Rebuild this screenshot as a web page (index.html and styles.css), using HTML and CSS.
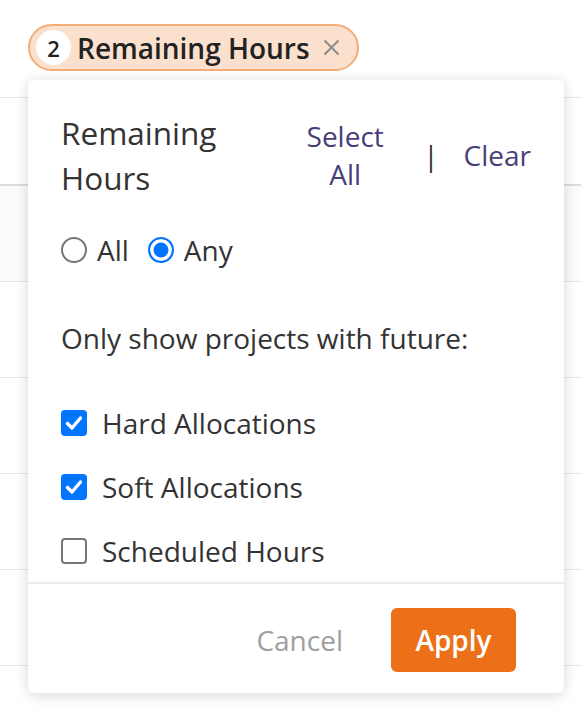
FILE: index.html
```html
<!DOCTYPE html>
<html>
<head>
<meta charset="utf-8">
<link rel="stylesheet" href="styles.css">
</head>
<body>
<div class="page">
  <div class="toolbar">
    <div class="chip">
      <span class="badge">2</span>
      <span class="chip-label">Remaining Hours</span>
      <svg class="chip-x" width="17" height="17" viewBox="0 0 17 17"><path d="M1.5 1.5 L15.5 15.5 M15.5 1.5 L1.5 15.5" stroke="#8c8c8c" stroke-width="2" fill="none"/></svg>
    </div>
  </div>
  <div class="row row-first"></div>
  <div class="row row-alt"></div>
  <div class="row"></div>
  <div class="row"></div>
  <div class="row"></div>
  <div class="row"></div>

  <div class="popup">
    <div class="popup-body">
      <div class="header">
        <div class="title">Remaining Hours</div>
        <div class="link select-all">Select All</div>
        <div class="pipe">|</div>
        <div class="link clear">Clear</div>
      </div>
      <div class="radios">
        <label class="opt"><span class="radio"></span>All</label>
        <label class="opt"><span class="radio on"></span>Any</label>
      </div>
      <div class="note">Only show projects with future:</div>
      <div class="checks">
        <label class="check-row"><span class="box on"><svg width="26" height="26" viewBox="0 0 26 26"><path d="M6.5 13.5 L11 18 L19.5 8" stroke="#fff" stroke-width="3.4" fill="none" stroke-linecap="round" stroke-linejoin="round"/></svg></span>Hard Allocations</label>
        <label class="check-row"><span class="box on"><svg width="26" height="26" viewBox="0 0 26 26"><path d="M6.5 13.5 L11 18 L19.5 8" stroke="#fff" stroke-width="3.4" fill="none" stroke-linecap="round" stroke-linejoin="round"/></svg></span>Soft Allocations</label>
        <label class="check-row"><span class="box"></span>Scheduled Hours</label>
      </div>
    </div>
    <div class="footer">
      <span class="cancel">Cancel</span>
      <span class="apply">Apply</span>
    </div>
  </div>
</div>
</body>
</html>
```
FILE: styles.css
```css
* { box-sizing: border-box; }
html, body { margin: 0; padding: 0; background: #fff; }
body { font-family: "Open Sans", "Noto Sans", sans-serif; color: #333; }
.page { position: relative; width: 581px; height: 717px; overflow: hidden; }

.toolbar { height: 98px; padding: 24px 0 0 28px; border-bottom: 1px solid #e4e4e4; }
.chip {
  display: inline-flex; align-items: center;
  height: 47px; width: 331px;
  border: 2px solid #f3ad76; border-radius: 24px;
  background: #fbe0cd;
  padding: 0 17px 0 6px;
}
.badge {
  width: 35px; height: 35px; border-radius: 50%;
  background: #fff; color: #222;
  display: flex; align-items: center; justify-content: center;
  font-size: 22px; font-weight: 600;
}
.chip-label { margin-left: 6px; font-size: 28px; font-weight: 600; color: #222; flex: 1; white-space: nowrap; }
.chip-x { flex: none; }

.row { height: 96px; border-bottom: 1px solid #e4e4e4; }
.row-first { height: 88px; border-bottom: 2px solid #dedede; }
.row-alt { background: #fbfbfb; }

.popup {
  position: absolute; left: 28px; top: 80px;
  width: 536px; height: 613px;
  background: #fff; border-radius: 6px;
  box-shadow: 0 2px 14px rgba(0,0,0,0.16);
}
.popup-body { padding: 30px 33px 0 33px; height: 502px; }
.header { display: flex; align-items: center; height: 90px; }
.title { font-size: 31.5px; line-height: 45px; flex: 1; color: #333; }
.link { color: #46407a; font-size: 28px; line-height: 38px; }
.select-all { width: 90px; text-align: center; }
.pipe { font-size: 28px; color: #333; margin-left: 33px; }
.clear { margin-left: 25px; }

.radios { display: flex; align-items: center; height: 40px; margin-top: 30px; gap: 19px; }
.opt { display: flex; align-items: center; font-size: 28px; color: #333; }
.radio {
  width: 26px; height: 26px; border-radius: 50%;
  border: 2px solid #767676; margin-right: 10px; background: #fff;
}
.radio.on { border-color: #0075ff; box-shadow: inset 0 0 0 3.5px #fff; background: #0075ff; }

.note { font-size: 28px; line-height: 40px; margin-top: 48px; }

.checks { margin-top: 45px; display: flex; flex-direction: column; gap: 24px; }
.check-row { display: flex; align-items: center; height: 40px; font-size: 28px; color: #333; }
.box {
  width: 26px; height: 26px; border-radius: 4px;
  border: 2px solid #767676; background: #fff;
  margin-right: 15px; position: relative; flex: none;
}
.box.on { background: #0075ff; border-color: #0075ff; }
.box svg { position: absolute; left: -2px; top: -2px; }

.footer {
  border-top: 2px solid #ebebeb;
  display: flex; justify-content: flex-end; align-items: center;
  gap: 48px; padding: 24px 48px 21px 0;
}
.cancel { font-size: 28px; color: #9e9e9e; }
.apply {
  width: 125px; height: 64px; border-radius: 6px;
  background: #ec7017; color: #fff;
  font-size: 28px; font-weight: 600;
  display: flex; align-items: center; justify-content: center;
}
```
